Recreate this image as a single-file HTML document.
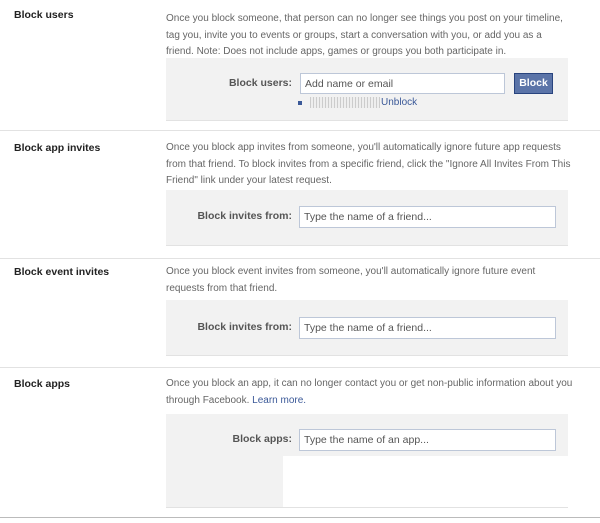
<!DOCTYPE html>
<html><head><meta charset="utf-8"><style>
body{margin:0;width:600px;height:523px;background:#fff;font-family:"Liberation Sans",sans-serif;font-size:10px;color:#333;position:relative;overflow:hidden}
.a{position:absolute}
.t{font-weight:bold;color:#222;left:14px;font-size:10.5px}
.d{left:166px;color:#666;line-height:16.5px;white-space:nowrap}
.box{background:#f2f2f2;border-bottom:1px solid #e2e2e2;left:166px;width:402px}
.hr{left:0;width:600px;height:1px;background:#e2e2e2}
.lab{font-weight:bold;color:#555;text-align:right;width:200px;font-size:10.5px}
.in{background:#fff;border:1px solid #bdc7d8;box-sizing:border-box;color:#555;padding:4px 4px;line-height:13px;font-size:10.5px}
</style></head><body>
<div class="a t" style="top:9px">Block users</div>
<div class="a d" style="top:11px">Once you block someone, that person can no longer see things you post on your timeline,<br>tag you, invite you to events or groups, start a conversation with you, or add you as a<br>friend. Note: Does not include apps, games or groups you both participate in.</div>
<div class="a box" style="top:58px;height:62px"></div>
<div class="a lab" style="left:92px;top:77px">Block users:</div>
<div class="a in" style="left:300px;top:73px;width:205px;height:21px">Add name or email</div>
<div class="a" style="left:514px;top:73px;width:39px;height:21px;background:#5b74a8;border:1px solid #29447e;box-sizing:border-box;color:#fff;font-weight:bold;text-align:center;line-height:19px;font-size:10.5px">Block</div>
<div class="a" style="left:298px;top:101px;width:4px;height:4px;background:#3b5998"></div>
<div class="a" style="left:310px;top:97px;width:70px;height:11px;background:repeating-linear-gradient(90deg,#ccc 0 1px,#eee 1px 3px)"></div>
<div class="a" style="left:381px;top:97px;color:#3b5998">Unblock</div>
<div class="a hr" style="top:130px"></div>

<div class="a t" style="top:142px">Block app invites</div>
<div class="a d" style="top:140px">Once you block app invites from someone, you'll automatically ignore future app requests<br>from that friend. To block invites from a specific friend, click the "Ignore All Invites From This<br>Friend" link under your latest request.</div>
<div class="a box" style="top:190px;height:55px"></div>
<div class="a lab" style="left:92px;top:210px">Block invites from:</div>
<div class="a in" style="left:299px;top:206px;width:257px;height:22px">Type the name of a friend...</div>
<div class="a hr" style="top:258px"></div>

<div class="a t" style="top:266px">Block event invites</div>
<div class="a d" style="top:264px">Once you block event invites from someone, you'll automatically ignore future event<br>requests from that friend.</div>
<div class="a box" style="top:300px;height:55px"></div>
<div class="a lab" style="left:92px;top:321px">Block invites from:</div>
<div class="a in" style="left:299px;top:317px;width:257px;height:22px">Type the name of a friend...</div>
<div class="a hr" style="top:367px"></div>

<div class="a t" style="top:378px">Block apps</div>
<div class="a d" style="top:376px">Once you block an app, it can no longer contact you or get non-public information about you<br>through Facebook. <span style="color:#3b5998">Learn more.</span></div>
<div class="a box" style="top:414px;height:93px"></div>
<div class="a" style="left:283px;top:456px;width:285px;height:51px;background:#fff"></div>
<div class="a lab" style="left:92px;top:433px">Block apps:</div>
<div class="a in" style="left:299px;top:429px;width:257px;height:22px">Type the name of an app...</div>
<div class="a hr" style="top:517px;background:#bbb"></div>
</body></html>
